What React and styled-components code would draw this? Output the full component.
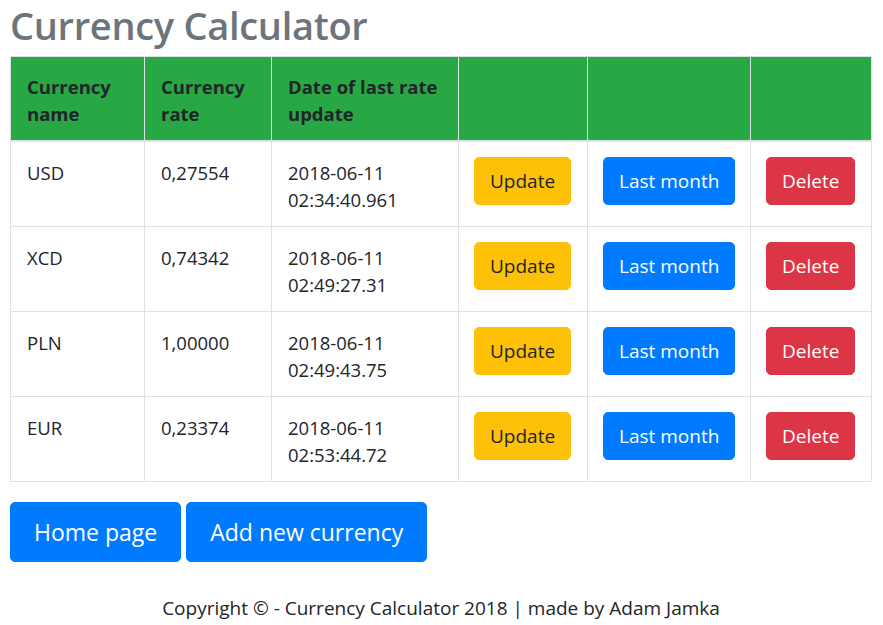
import styled, { createGlobalStyle } from "styled-components";

const currencies = [
  { code: "USD", rate: "0,27554", date: "2018-06-11", time: "02:34:40.961" },
  { code: "XCD", rate: "0,74342", date: "2018-06-11", time: "02:49:27.31" },
  { code: "PLN", rate: "1,00000", date: "2018-06-11", time: "02:49:43.75" },
  { code: "EUR", rate: "0,23374", date: "2018-06-11", time: "02:53:44.72" },
];

const colWidths = [134, 127, 187, 129, 163, 121];

const GlobalStyle = createGlobalStyle`
  body {
    margin: 0;
    background: #fff;
    color: #212529;
    font-family: "Open Sans", "Noto Sans", sans-serif;
    font-size: 18px;
    line-height: 1.5;
  }
`;

const Page = styled.div`
  padding: 0 11px 0 10px;
`;

const Title = styled.h1`
  margin: 0 0 6px;
  font-size: 38px;
  font-weight: 600;
  line-height: 50px;
  color: #6c757d;
  letter-spacing: -0.3px;
`;

const Table = styled.table`
  width: 862px;
  border-collapse: collapse;
  table-layout: fixed;
  margin-bottom: 20px;
`;

const HeadCell = styled.th`
  background: #28a745;
  color: #212529;
  font-weight: 700;
  font-size: 18.5px;
  text-align: left;
  vertical-align: bottom;
  padding: 16px 12px 13px 16px;
  border: 1px solid #dee2e6;
  border-bottom-width: 2px;
  line-height: 27px;
`;

const Cell = styled.td`
  border: 1px solid #dee2e6;
  vertical-align: top;
  font-size: 18.5px;
  line-height: 27px;
  padding: ${({ $action }) => ($action ? "15px 14px 21px 15px" : "17px 12px 13px 16px")};
  height: ${({ $action }) => ($action ? "48px" : "auto")};
`;

const palette = {
  warning: { bg: "#ffc107", fg: "#212529" },
  primary: { bg: "#007bff", fg: "#fff" },
  danger: { bg: "#dc3545", fg: "#fff" },
};

const Button = styled.button`
  display: inline-block;
  vertical-align: top;
  border: 1px solid ${({ $variant }) => palette[$variant].bg};
  background: ${({ $variant }) => palette[$variant].bg};
  color: ${({ $variant }) => palette[$variant].fg};
  font-family: inherit;
  font-size: 19px;
  line-height: 30px;
  padding: 8px 15px;
  border-radius: 5px;
  cursor: pointer;
  white-space: nowrap;
`;

const Actions = styled.div`
  display: flex;
  gap: 5px;
`;

const BigButton = styled(Button)`
  font-size: 23px;
  line-height: 36px;
  padding: 11px 23px;
  border-radius: 5px;
`;

const Footer = styled.footer`
  margin-top: 33px;
  text-align: center;
  font-size: 19px;
  line-height: 27px;
`;

export default function App() {
  return (
    <Page>
      <GlobalStyle />
      <Title>Currency Calculator</Title>
      <Table>
        <colgroup>
          {colWidths.map((w, i) => (
            <col key={i} style={{ width: w }} />
          ))}
        </colgroup>
        <thead>
          <tr>
            <HeadCell>Currency name</HeadCell>
            <HeadCell>Currency rate</HeadCell>
            <HeadCell>Date of last rate update</HeadCell>
            <HeadCell />
            <HeadCell />
            <HeadCell />
          </tr>
        </thead>
        <tbody>
          {currencies.map((c) => (
            <tr key={c.code}>
              <Cell>{c.code}</Cell>
              <Cell>{c.rate}</Cell>
              <Cell>
                {c.date}
                <br />
                {c.time}
              </Cell>
              <Cell $action>
                <Button $variant="warning">Update</Button>
              </Cell>
              <Cell $action>
                <Button $variant="primary">Last month</Button>
              </Cell>
              <Cell $action>
                <Button $variant="danger">Delete</Button>
              </Cell>
            </tr>
          ))}
        </tbody>
      </Table>
      <Actions>
        <BigButton $variant="primary">Home page</BigButton>
        <BigButton $variant="primary">Add new currency</BigButton>
      </Actions>
      <Footer>Copyright © - Currency Calculator 2018 | made by Adam Jamka</Footer>
    </Page>
  );
}
